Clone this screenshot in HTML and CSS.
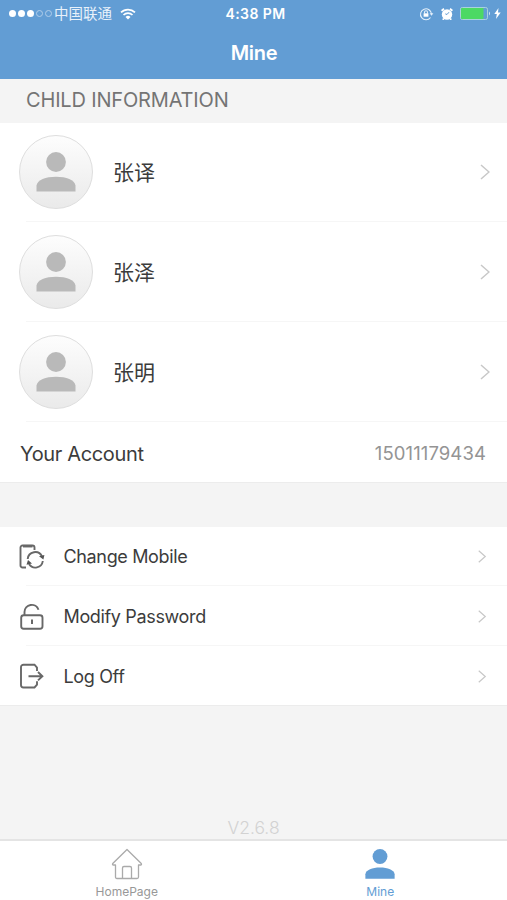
FILE: index.html
```html
<!DOCTYPE html>
<html lang="en">
<head>
    <meta charset="UTF-8">
    <meta name="viewport" content="width=device-width, initial-scale=1.0">
    <title>Mine</title>
    <link rel="stylesheet" href="styles.css">
</head>
<body>
    <svg class="symbols" width="0" height="0">
        <symbol id="person" viewBox="0 0 40 40">
            <circle cx="20" cy="10" r="9.9"/>
            <path d="M.5 39.500V33.500C1.500 28 9.500 24.800 20 24.800s18.500 3.200 19.500 8.700v6z"/>
        </symbol>
        <symbol id="chevron" viewBox="0 0 10 16">
            <path d="M1 1l8 7-8 7" fill="none" stroke="currentColor" stroke-width="1.500"/>
        </symbol>
    </svg>

    <div class="page">
        <header class="header">
            <div class="status">
                <div class="status-left">
                    <div class="signal"><i></i><i></i><i></i><i class="off"></i><i class="off"></i></div>
                    <span class="carrier">中国联通</span>
                    <svg class="wifi" width="16" height="12" viewBox="0 0 16 12" fill="none" stroke="#fff" stroke-width="1.700">
                        <path d="M1 4.400a10 10 0 0 1 14 0M3.500 7a6.400 6.400 0 0 1 9 0"/>
                        <path d="M5.500 9a3.600 3.600 0 0 1 5 0L8 11.500z" fill="#fff" stroke="none"/>
                    </svg>
                </div>
                <span class="time">4:38 PM</span>
                <div class="status-right">
                    <svg class="lock" width="15" height="14" viewBox="0 0 15 14" fill="none" stroke="#e3effa" stroke-width="1.100">
                        <path d="M11.500 10.500A5.500 5.500 0 1 1 12.500 7"/>
                        <path d="M10.600 6.300h3.800l-1.900 2.500z" fill="#e3effa" stroke="none"/>
                        <path d="M5.500 6.500V5.300a1.500 1.500 0 0 1 3 0v1.200"/>
                        <rect x="4.600" y="6.300" width="4.800" height="3.400" fill="#fff" stroke="none"/>
                    </svg>
                    <svg class="alarm" width="12" height="12" viewBox="0 0 12 12">
                        <circle cx="6" cy="6.500" r="5.200" fill="#fff"/>
                        <path d="M.6 2.800L3 .8M11.400 2.800L9 .8M2.800 10.500l-1 1.300M9.200 10.500l1 1.300" stroke="#fff" stroke-width="1.800"/>
                        <path d="M8 4.200L6 6.500 4.300 5.900" fill="none" stroke="#639dd4" stroke-width="1"/>
                    </svg>
                    <svg class="battery" width="31" height="13" viewBox="0 0 31 13">
                        <rect x=".5" y=".5" width="27" height="12" rx="1.800" fill="none" stroke="#a9d2dc"/>
                        <rect x="1" y="1" width="22.500" height="11" rx="1" fill="#4cd964"/>
                        <path d="M29 4.500q2 2 0 4z" fill="#d5e6f5"/>
                    </svg>
                    <svg width="7" height="11" viewBox="0 0 7 11"><path d="M4.500 0L.3 6h2.500L2 11l4.700-6.500H4z" fill="#fff"/></svg>
                </div>
            </div>
            <h1 class="title">Mine</h1>
        </header>

        <h2 class="section-title">CHILD INFORMATION</h2>
        <div class="list">
            <div class="child">
                <div class="avatar"><svg width="40" height="40"><use href="#person"/></svg></div>
                <span class="child-name">张译</span>
                <svg class="arrow" width="10" height="16"><use href="#chevron"/></svg>
            </div>
            <div class="child">
                <div class="avatar"><svg width="40" height="40"><use href="#person"/></svg></div>
                <span class="child-name">张泽</span>
                <svg class="arrow" width="10" height="16"><use href="#chevron"/></svg>
            </div>
            <div class="child">
                <div class="avatar"><svg width="40" height="40"><use href="#person"/></svg></div>
                <span class="child-name">张明</span>
                <svg class="arrow" width="10" height="16"><use href="#chevron"/></svg>
            </div>
            <div class="account">
                <span class="account-label">Your Account</span>
                <span class="account-number">15011179434</span>
            </div>
        </div>

        <div class="list menu">
            <div class="menu-item">
                <svg class="menu-icon" width="26" height="28" viewBox="0 0 26 28">
                    <path d="M7 24.500H3.500a2 2 0 0 1-2-2v-18a2 2 0 0 1 2-2h10a2 2 0 0 1 2 2V7"/>
                    <path d="M4 3.200h9.500" stroke-width="2.500"/>
                    <path d="M8.700 16a7.500 7.500 0 0 1 14.300-2.500M23.800 18a7.500 7.500 0 0 1-13.800 3"/>
                    <path d="M20 13.200l5.400-1.200-1 4.400zM13 20.500L7.500 21.800l1.500-4.800z" fill="#555" stroke="none"/>
                </svg>
                <span class="menu-text">Change Mobile</span>
                <svg class="arrow" width="10" height="13"><use href="#chevron"/></svg>
            </div>
            <div class="menu-item">
                <svg class="menu-icon" width="26" height="28" viewBox="0 0 26 28">
                    <rect x="2.200" y="12.300" width="21.300" height="13.500" rx="2.500"/>
                    <path d="M5.500 12V9a7.200 7.200 0 0 1 14-2.300"/>
                    <path d="M13 16.500v4.500" stroke-width="2"/>
                </svg>
                <span class="menu-text">Modify Password</span>
                <svg class="arrow" width="10" height="13"><use href="#chevron"/></svg>
            </div>
            <div class="menu-item">
                <svg class="menu-icon" width="26" height="28" viewBox="0 0 26 28">
                    <path d="M18 9V5.500L15.500 2.700H4.500a2.500 2.500 0 0 0-2.500 2.500V23a2.500 2.500 0 0 0 2.500 2.500h11l2.500-2.800v-3.500"/>
                    <path d="M9.500 14.200h13.500M19 10l4.400 4.200-4.400 4.200"/>
                </svg>
                <span class="menu-text">Log Off</span>
                <svg class="arrow" width="10" height="13"><use href="#chevron"/></svg>
            </div>
        </div>

        <div class="version">V2.6.8</div>

        <nav class="tabs">
            <div class="tab">
                <svg width="32" height="32" viewBox="0 0 32 32" fill="none" stroke="#aaa" stroke-width="1.300" stroke-linejoin="round">
                    <path d="M4.500 17H2q-1-.7 0-1.700L16 1.500l14 13.800q1 1 0 1.700h-2.500v12q0 1.500-1.500 1.500H6q-1.500 0-1.500-1.500z"/>
                    <path d="M11.500 30.500V20q0-1.500 1.500-1.500h6q1.500 0 1.500 1.500v10.500"/>
                </svg>
                <span class="tab-text">HomePage</span>
            </div>
            <div class="tab active">
                <svg width="30" height="30"><use href="#person"/></svg>
                <span class="tab-text">Mine</span>
            </div>
        </nav>
    </div>
</body>
</html>
```
FILE: styles.css
```css
* {
    box-sizing: border-box;
    margin: 0;
    padding: 0;
}
body {
    background-color: #f4f4f4;
    color: #3c3c3c;
    font-family: Inter, "Noto Sans CJK SC", sans-serif;
}
svg {
    display: block;
    flex-shrink: 0;
}
.symbols {
    position: absolute;
}
.page {
    display: flex;
    flex-direction: column;
    height: 900px;
    overflow: hidden;
}
.header {
    height: 79px;
    background-color: #629dd4;
    color: #fff;
}
.status {
    display: grid;
    grid-template-columns: 1fr auto 1fr;
    align-items: center;
    height: 27px;
    padding: 0 6px 0 9px;
}
.status-left,
.status-right {
    display: flex;
    align-items: center;
}
.status-right {
    justify-content: flex-end;
}
.signal {
    display: flex;
    gap: 2px;
}
.signal i {
    width: 7px;
    height: 7px;
    border-radius: 50%;
    background-color: #fff;
}
.signal .off {
    background: none;
    border: 1px solid #b0cdea;
}
.carrier {
    margin: 0 8px 0 2px;
    font-size: 14.5px;
    line-height: 20px;
    color: #e8f1fa;
}
.time {
    padding-left: 1px;
    font-size: 14px;
    font-weight: 600;
    letter-spacing: 0.4px;
    line-height: 20px;
}
.lock {
    margin-right: 7px;
}
.alarm {
    margin-right: 7px;
}
.battery {
    margin-right: 3px;
}
.title {
    padding-left: 1px;
    font-size: 20px;
    font-weight: 600;
    letter-spacing: -0.3px;
    line-height: 52px;
    text-align: center;
}
.section-title {
    height: 44px;
    padding-left: 26px;
    font-size: 20px;
    font-weight: 400;
    letter-spacing: -0.17px;
    line-height: 42px;
    color: #747474;
}
.list {
    background-color: #fff;
    border-bottom: 1px solid #ececec;
}
.child {
    position: relative;
    display: flex;
    align-items: center;
    height: 100px;
    padding: 0 17px 2px 19px;
}
.child::after,
.menu-item:not(:last-child)::after {
    content: "";
    position: absolute;
    left: 26px;
    right: 0;
    bottom: 1px;
    height: 1px;
    background-color: #f6f6f6;
}
.avatar {
    display: flex;
    justify-content: center;
    width: 74px;
    height: 74px;
    padding-top: 16px;
    border: 1px solid #dedede;
    border-radius: 50%;
    background: linear-gradient(#fdfdfd, #eaeaea);
    fill: #b9b9b9;
}
.child-name {
    flex: 1;
    margin-left: 20px;
    padding-top: 1px;
    font-size: 21px;
    line-height: 31px;
}
.arrow {
    color: #c8c8c8;
}
.account {
    display: flex;
    justify-content: space-between;
    align-items: center;
    height: 59px;
    padding: 2px 21px 0 20px;
}
.account-label {
    font-size: 20px;
    letter-spacing: -0.35px;
}
.account-number {
    padding-bottom: 2px;
    font-size: 18.5px;
    letter-spacing: 0.1px;
    color: #949494;
}
.menu {
    margin-top: 44px;
}
.menu-item {
    position: relative;
    display: flex;
    align-items: center;
    height: 60px;
    padding: 0 20px 1px 19px;
}
.menu-item:last-child {
    height: 58px;
    padding-bottom: 0;
}
.menu-icon {
    fill: none;
    stroke: #686868;
    stroke-width: 1.9;
}
.menu-text {
    flex: 1;
    margin-left: 18.5px;
    font-size: 18px;
    letter-spacing: -0.35px;
}
.version {
    margin-top: auto;
    font-size: 17.5px;
    font-weight: 300;
    line-height: 22px;
    text-align: center;
    color: #d2d2d2;
}
.tabs {
    display: flex;
    height: 61px;
    border-top: 2px solid #e4e4e4;
    background-color: #fff;
}
.tab {
    flex: 1;
    display: flex;
    flex-direction: column;
    align-items: center;
    padding-top: 7px;
    color: #989898;
}
.tab.active {
    padding-top: 8px;
    color: #629dd4;
    fill: #629dd4;
}
.tab-text {
    margin-top: auto;
    font-size: 12px;
    line-height: 17px;
}
```
